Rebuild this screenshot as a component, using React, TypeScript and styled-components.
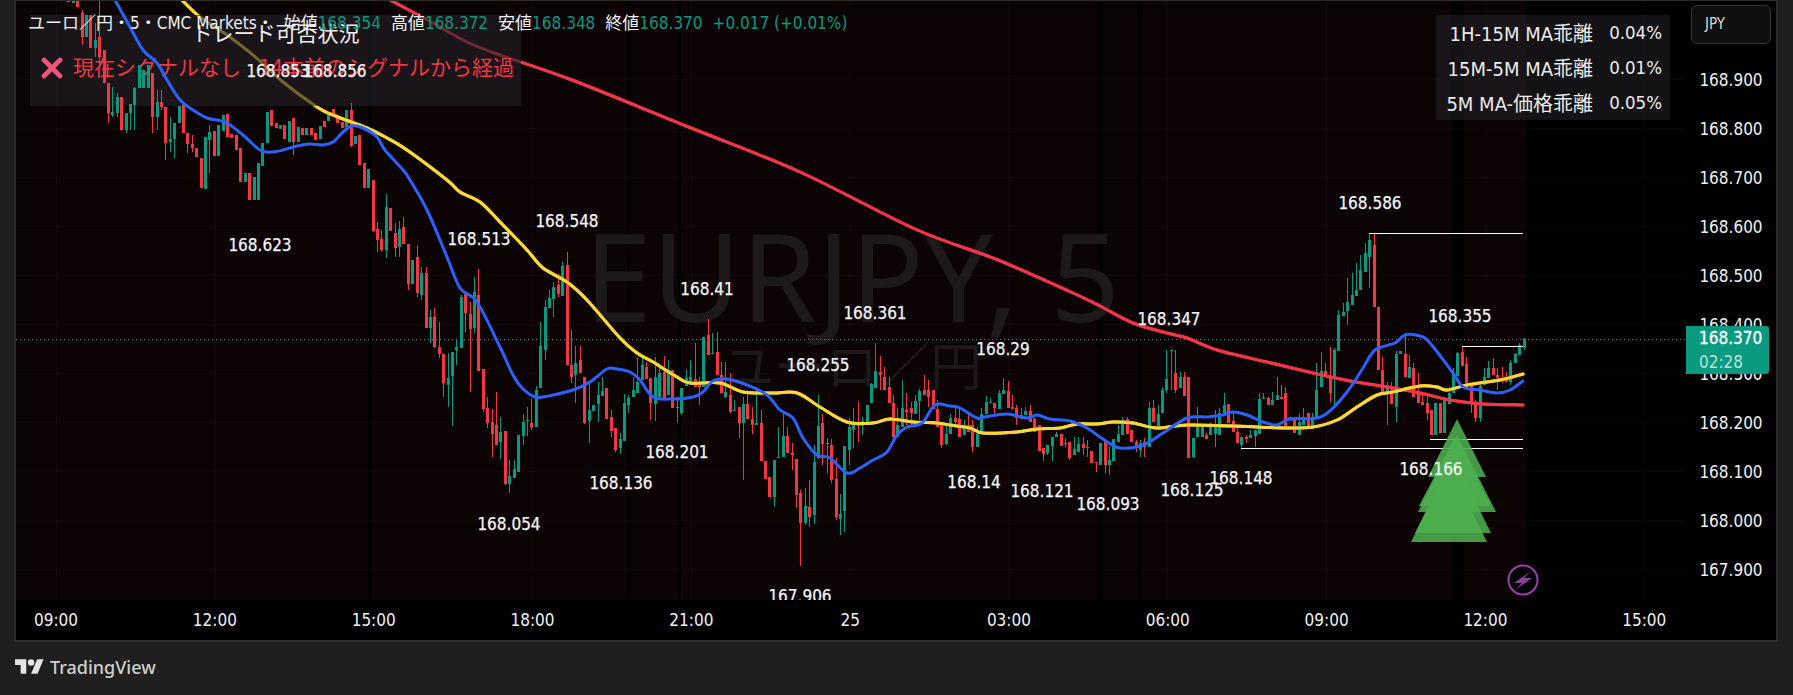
import { type FC } from "react";
import styled, { createGlobalStyle } from "styled-components";

const FONT = `"DejaVu Sans Condensed", "DejaVu Sans", "Noto Sans CJK JP", sans-serif`;
const GREEN = "#089981";
const RED = "#f23645";
const BAR_STEP = 4.41;
const BAR_ORIGIN = 68.3;

const GlobalStyle = createGlobalStyle`
  html, body {
    margin: 0;
    padding: 0;
    background: #1f1f1f;
    overflow: hidden;
  }
`;

const Page = styled.div`
  width: 1793px;
  height: 695px;
  display: flex;
  flex-direction: column;
  background: #1f1f1f;
  font-family: ${FONT};
`;

const Frame = styled.div`
  box-sizing: border-box;
  width: 1764px;
  height: 642px;
  margin-left: 14px;
  border: 2px solid #2d2d2d;
  border-top-width: 1px;
  background: #000;
  display: flex;
  flex-direction: column;
`;

const ChartRow = styled.div`
  display: flex;
  height: 599px;
`;

const Pane = styled.div`
  position: relative;
  width: 1670px;
  height: 599px;
  overflow: hidden;
  background: #000;
`;

const PlotLayer = styled.svg<{ $z: number }>`
  position: absolute;
  inset: 0;
  width: 1670px;
  height: 599px;
  z-index: ${({ $z }) => $z};
`;

const Watermark = styled.text<{ $size: number }>`
  font-family: "Noto Sans", "Noto Sans CJK JP", sans-serif;
  font-size: ${({ $size }) => $size}px;
  fill: #1d191b;
  text-anchor: middle;
`;

const PivotLabel = styled.text`
  font-family: ${FONT};
  font-size: 17px;
  fill: #f4f4f4;
  stroke: #f4f4f4;
  stroke-width: 0.25px;
  text-anchor: middle;
  dominant-baseline: central;
`;

const Legend = styled.div`
  position: absolute;
  top: 12px;
  left: 12px;
  z-index: 5;
  display: flex;
  align-items: center;
  gap: 10px;
  font-size: 17px;
  line-height: 20px;
  color: #f0f0f0;
  white-space: nowrap;
`;

const LegendItem = styled.span`
  display: inline-flex;
`;

const LegendValue = styled.span`
  color: ${GREEN};
`;

const StatusPanel = styled.div`
  position: absolute;
  top: 14px;
  left: 14px;
  width: 491px;
  height: 91px;
  z-index: 2;
  background: rgba(34, 32, 38, 0.62);
  display: flex;
  flex-direction: column;
  align-items: center;
`;

const StatusTitle = styled.div`
  margin-top: 5px;
  font-size: 21px;
  line-height: 28px;
  color: #f0f0f0;
`;

const StatusRow = styled.div`
  align-self: flex-start;
  display: flex;
  align-items: center;
  gap: 10px;
  margin: 6px 0 0 11px;
  font-size: 21px;
  line-height: 28px;
  color: ${RED};
  white-space: pre;
`;

const DivergenceTable = styled.div`
  position: absolute;
  top: 14px;
  left: 1420px;
  width: 234px;
  height: 105px;
  z-index: 2;
  background: rgba(34, 35, 40, 0.55);
  display: grid;
  grid-template-columns: 157px 69px;
  grid-auto-rows: 35px;
  align-items: center;
  color: #ececec;
`;

const DivergenceName = styled.div`
  text-align: right;
  white-space: nowrap;
  font-size: 20px;
`;

const DivergenceValue = styled.div`
  text-align: right;
  font-size: 18.5px;
`;

const PriceAxis = styled.div`
  position: relative;
  width: 90px;
  height: 599px;
  background: #000;
`;

const CurrencyButton = styled.div`
  box-sizing: border-box;
  width: 80px;
  height: 39px;
  margin: 4px 0 0 5px;
  padding-left: 13px;
  border: 1px solid #33363d;
  border-radius: 6px;
  background: #0e0e0f;
  font-size: 15px;
  line-height: 36px;
  color: #d8d8d8;
`;

const PriceScale = styled.div`
  margin-top: 12px;
  display: flex;
  flex-direction: column;
`;

const PriceTick = styled.div`
  height: 49px;
  line-height: 49px;
  width: 90px;
  text-align: center;
  font-size: 17px;
  color: #f0f0f0;
`;

const LastPriceBadge = styled.div`
  box-sizing: border-box;
  position: absolute;
  top: 325px;
  left: 0;
  width: 83px;
  height: 48px;
  padding-left: 13px;
  z-index: 3;
  background: #0a9a7f;
  border-radius: 0 3px 3px 0;
  font-size: 17px;
  line-height: 24px;
  color: #fff;
  -webkit-text-stroke: 0.3px #fff;
`;

const Countdown = styled.div`
  color: rgba(255, 255, 255, 0.72);
  -webkit-text-stroke: 0;
`;

const TimeAxis = styled.div`
  flex: 1;
  display: flex;
  align-items: center;
  gap: 114.75px;
  padding-left: 18px;
  background: #000;
  overflow: hidden;
`;

const TimeTick = styled.div`
  flex: 0 0 44px;
  text-align: center;
  font-size: 17px;
  white-space: nowrap;
  color: #f0f0f0;
`;

const Footer = styled.div`
  flex: 1;
  display: flex;
  align-items: center;
  gap: 6px;
  padding: 0 0 4px 15px;
`;

const Wordmark = styled.div`
  font-family: "Noto Sans", sans-serif;
  font-size: 18px;
  font-weight: 500;
  color: #cfcfcf;
`;

type CandleSegment = { ox: number; oy: number; rows: string };

// kind + x,top,bottom[,wickTop[,wickBottom]] read off 3x crops of the reference
const SEGMENTS: CandleSegment[] = [
  {
    ox: 0,
    oy: 0,
    rows: `r205,0,6 g222,0,8 r235,0,20 r248,40,110,30,135 g262,45,110 r275,45,145 g290,120,145,70,170 r302,110,170,0,200
      r314,150,250 r328,250,340,250,368 g340,335,345,260,350 g355,290,340,280,350 r367,290,390 g380,340,390,340,400
      g394,312,340,312,390 g406,265,315,260,390 g421,195,265 g433,210,265 g445,195,265 r460,220,350,220,400
      g472,305,350,270,390 r487,305,320,270,330 r499,320,430,320,480 g513,418,425,350,455 g526,368,418,368,475
      g540,318,370 r552,315,400 r565,400,432,400,460 r580,432,445,405,455 r593,443,470 r605,475,565 g618,412,568
      g632,397,420,375,520 r646,392,468 g660,375,468 g672,345,392 r686,342,412 r698,402,415 r712,405,450
      r725,445,545 g738,520,545 r752,520,600 g765,530,600 g778,490,600 g790,430,498 g803,335,428 r818,330,378
      r830,370,385 g845,375,387 r856,375,418 g868,363,425 r884,355,425,355,465 g896,380,425 r910,385,405
      g922,385,405 r936,385,405 r948,400,420 g962,378,418 r975,362,380 g988,335,362 r1000,328,350 r1015,345,370
      r1028,365,385 g1042,330,382 r1055,330,437,310,440 g1068,408,432 r1080,405,495 r1094,490,565 g1108,507,565`,
  },
  {
    ox: 300,
    oy: 180,
    rows: `r220,0,152,0,155 r234,148,180,125,215 r247,178,210,150,215 g260,80,210,42,233 r273,83,152 r286,160,203,130,230
      g300,148,200,122,230 r313,142,192,112 r326,192,312,192,330 g340,240,312 r353,230,338,195,352 g367,280,345,262,360
      r380,278,445,260 g393,410,445,390,488 r406,412,502,385,505 r419,502,522,425,535 r433,522,610,522,652
      g446,593,614,520,680 g459,516,587,516,737 g472,500,510,478,555 g485,350,503,345 r499,342,398,338,455
      r512,402,447,365,635 g524,335,445,292,458 r538,345,572,268 r551,568,688,568,695 r565,685,728,650,745
      r578,725,762,688,832 r590,735,795,635,795 g605,755,785,712,838 r617,752,912,752,915 g631,887,912,840,940
      g644,868,895,840 g657,765,875 g670,727,767,703,795 g683,720,722,680,767 r697,730,742,658,750 g710,630,740,618
      g724,498,625,427 g737,380,510,360,540 g749,355,383,330 g763,320,357,305,410 r776,315,342,282,350 g790,258,348,245
      r803,255,555,215 r816,555,590,450,610 g829,550,585,498,668 r842,540,578,498 r856,592,728,590,732
      g869,690,722,605,790 g882,675,692 g895,645,672,605,725 g908,632,648,590 r922,625,718 r935,712,752,690,770
      r948,745,810,745,815 g961,778,805,760,822 g974,670,782,642 g988,655,675,645,700 g1001,630,652,590
      g1013,605,638,530 g1027,555,600,530 r1040,560,597,545 r1055,595,670,595,720 g1067,592,672,530,722
      g1081,580,652,555 r1094,575,655,528 g1107,570,645,540 r1120,570,685 r1133,680,685,650,725 g1146,625,698,625,705
      g1159,595,618,570 g1172,590,605,540 r1186,598,620,490 r1199,610,622,590,675 g1213,472,622 r1225,465,525,418
      g1238,518,520,458 r1252,515,585,455 r1264,585,640,545 g1277,635,650,545,655 r1290,645,695,578,700
      g1303,690,692,660 r1317,682,728,682,775 g1330,672,730,650,900 r1344,672,718,630 r1357,718,735,680,762
      g1370,730,735,620 r1384,730,842,690 r1397,842,897 r1411,890,950 g1424,840,950,840,980 g1437,832,835,740
      g1450,768,832,700 r1463,768,820,740 r1477,820,825,790,870`,
  },
  {
    ox: 660,
    oy: 340,
    rows: `r408,357,465,357,505 r421,460,550,450,677 g436,498,550,445,555 r449,502,532,420,560 g463,365,525,315,552
      g476,258,355,165,358 r488,248,312,222,375 r502,310,312,295,400 r515,315,420,298,430 r529,418,530,355,540
      g542,522,537,462,585 g553,318,512,318,575 g568,262,330,235,375 g581,245,270,205,325 r594,245,258,185,305
      g607,243,258,230,285 g620,195,250 g634,132,190,130 g647,92,145,10,145 r660,97,105,48,150 r674,112,150,82
      r688,142,190,112 r701,190,290,165,295 g713,255,290,205 g727,205,260,120 r740,210,217,160,255 r753,205,218,185,255
      g766,182,222,165 g779,152,182,148,240 r793,150,165,105 r806,150,172,120,200 r820,150,207 r833,207,262,180,262
      r845,255,315,255,325 g858,282,312,250,315 g871,235,282,222 r885,235,245,200,265`,
  },
  {
    ox: 950,
    oy: 340,
    rows: `r28,237,290,205 g41,262,285,240 r54,255,275,215 r67,255,320,240,335 g81,282,322,260 g94,222,282,205
      g106,185,222,168 g120,185,187,175 r133,190,205,190,232 g147,160,208,150 g160,150,162,115 r173,153,203,122
      r186,200,207,165 r199,205,235,195,255 g213,225,238,205 g226,212,225,200 r239,212,245,195 r253,237,275,235
      r266,255,332 r280,325,342,325,362 g293,315,340,315,345 g307,292,318,292,362 g320,282,290,275 r333,282,318
      g346,308,310,295,322 r359,307,355,307,360 g373,328,345,292 g386,312,335,292 r398,312,325,292,345
      r411,322,325,300,350 r425,333,370 r439,365,368,365,395 g452,310,375 r465,300,375,300,400 g478,360,375,320,405
      g491,298,362 g505,282,305,255 g518,240,285,232 r531,238,282,232 r545,270,305 r558,305,320,300,335
      g571,308,330,300,352 r584,305,322,295,352 g596,205,322,185 r610,205,245,180 g622,222,258,195 g636,150,218,140
      g650,118,150,30,160 g662,30,32,30,150 r676,100,150,30,160 g689,110,145,95 r703,112,168,95 r716,112,353
      g728,295,350,295,355 g742,262,290,200 g756,262,290,260 r769,285,297,280 g782,250,285 g795,262,282,210,320
      g808,220,285,205 g821,195,220,160 r835,192,248 r848,242,275,220 r862,275,310,255 g875,292,315,290,320
      r888,290,297,285,310`,
  },
  {
    ox: 1100,
    oy: 200,
    rows: `g451,705,715,690 g464,690,708,690,740 g477,598,702,580 g490,595,598,580 r503,595,615,590 g517,600,615,575
      g530,585,600,530 r544,592,598,555 r556,580,680,560 g569,650,660 r583,655,700 g596,665,705,640 g609,650,675,625
      r622,638,680 g635,650,680,640 g649,570,655,488 g662,512,560,455 r676,512,530,490 r689,530,580,440,605
      g702,450,535,445,615 g715,345,452,330 g728,335,348,310 g742,305,332,235,375 g755,285,315,220 g768,270,288,190
      g781,210,270,165 g794,158,215,130 g808,120,170,100,265 r821,135,322,100 r834,322,510 r847,510,580,470
      g860,555,580,545,675 r873,570,612,545 g887,462,622,452,665 g901,452,462 r914,462,532,400 g927,502,535,465
      r940,505,590,490 r953,575,610,520 r966,605,615,585 r979,610,640,585,660 r992,630,705 g1005,610,705 r1019,610,700
      g1032,600,700,590 g1045,578,612,560 g1058,520,580,505 g1071,458,528,455 r1085,455,498,440 r1098,492,555,470
      r1111,555,605,555,640 r1124,605,655,600,665 g1138,558,655,555,665 g1151,530,555,505 g1165,505,535,482
      r1178,505,525,475 r1191,525,535,505,570 r1204,535,540,500,550 r1217,535,545,515,545 g1231,488,545,480,555
      g1244,462,490,458 g1257,435,465,430 g1270,418,445,415,450`,
  },
];

type Candle = { x: number; top: number; bottom: number; wickTop: number; wickBottom: number; up: boolean };

const CANDLES: Candle[] = SEGMENTS.flatMap(({ ox, oy, rows }) =>
  rows
    .trim()
    .split(/\s+/)
    .map((row) => {
      const [zx, top, bottom, wickTop = top, wickBottom = bottom] = row.slice(1).split(",").map(Number);
      const raw = ox + zx / 3;
      return {
        x: Math.round(BAR_ORIGIN + BAR_STEP * Math.round((raw - BAR_ORIGIN) / BAR_STEP)),
        top: oy + top / 3,
        bottom: oy + bottom / 3,
        wickTop: oy + wickTop / 3,
        wickBottom: oy + wickBottom / 3,
        up: row[0] === "g",
      };
    })
);

// catmull-rom through the read-off points, moving averages have no corners
const smoothPath = (points: string) => {
  const p = points.split(" ").map((pair) => pair.split(",").map(Number));
  let d = `M${p[0][0]} ${p[0][1]}`;
  for (let i = 0; i < p.length - 1; i++) {
    const a = p[Math.max(i - 1, 0)];
    const b = p[i];
    const c = p[i + 1];
    const e = p[Math.min(i + 2, p.length - 1)];
    const c1x = b[0] + (c[0] - a[0]) / 6;
    const c1y = b[1] + (c[1] - a[1]) / 6;
    const c2x = c[0] - (e[0] - b[0]) / 6;
    const c2y = c[1] - (e[1] - b[1]) / 6;
    d += `C${c1x.toFixed(1)} ${c1y.toFixed(1)} ${c2x.toFixed(1)} ${c2y.toFixed(1)} ${c[0]} ${c[1]}`;
  }
  return d;
};

const BLUE_LINE =
  "115,0 130,27 143,50 157,63 167,80 180,100 193,110 207,118 217,120 227,123 243,135 260,150 273,152 290,148 297,146 310,144 323,145 333,142 343,132 352,126 363,128 377,137 385,150 403,170 410,180 427,210 447,257 460,288 477,302 500,347 513,375 523,389 535,397 543,397 553,395 573,390 590,382 607,369 617,369 630,372 640,380 653,397 673,399 693,397 703,392 713,381 727,379 747,385 767,395 780,410 793,418 803,438 817,455 830,458 847,473 860,468 873,460 887,452 897,435 907,427 922,423 935,405 950,406 960,408 977,418 985,417 1007,414 1027,418 1037,415 1050,419 1070,421 1087,428 1103,439 1120,448 1143,445 1163,433 1187,418 1207,417 1223,415 1233,412 1247,415 1263,422 1277,425 1290,419 1317,418 1333,408 1350,388 1363,368 1375,350 1395,343 1405,335 1420,336 1430,343 1453,373 1463,387 1480,390 1497,393 1510,390 1523,381";
const YELLOW_LINE =
  "182,0 200,17 227,35 253,55 283,82 317,107 333,115 367,128 387,138 407,150 447,180 460,192 480,202 500,222 527,250 543,268 567,282 587,300 620,338 637,353 653,362 677,377 690,383 720,383 743,392 773,393 797,393 820,407 847,422 873,423 890,419 913,422 937,423 950,425 970,428 983,433 1017,432 1037,429 1060,428 1077,424 1097,424 1113,422 1133,423 1157,428 1187,425 1233,426 1257,427 1287,428 1313,427 1337,420 1357,407 1377,395 1393,392 1420,386 1437,387 1447,390 1467,385 1500,380 1523,374";
const RED_LINE =
  "390,0 433,23 467,42 500,55 572,80 686,126 800,172 915,229 998,260 1073,293 1100,306 1133,323 1167,333 1187,338 1217,350 1267,362 1313,373 1350,381 1387,387 1420,393 1450,400 1483,404 1523,405";

const LEVELS = [
  { x1: 1369, y: 233 },
  { x1: 1462, y: 346 },
  { x1: 1430, y: 439 },
  { x1: 1241, y: 448 },
];

const TREES = [
  { apex: 1457, top: 419, base: 477, half: 29 },
  { apex: 1455, top: 437, base: 506, half: 36 },
  { apex: 1457, top: 435, base: 512, half: 39 },
  { apex: 1453, top: 457, base: 533, half: 38 },
  { apex: 1449, top: 465, base: 542, half: 38 },
];

const PIVOTS = [
  { text: "168.853", x: 278, y: 71 },
  { text: "168.856", x: 335, y: 71 },
  { text: "168.623", x: 260, y: 245 },
  { text: "168.513", x: 479, y: 239 },
  { text: "168.548", x: 567, y: 221 },
  { text: "168.41", x: 707, y: 289 },
  { text: "168.361", x: 875, y: 313 },
  { text: "168.255", x: 818, y: 365 },
  { text: "168.29", x: 1003, y: 349 },
  { text: "168.347", x: 1169, y: 319 },
  { text: "168.586", x: 1370, y: 203 },
  { text: "168.355", x: 1460, y: 316 },
  { text: "168.201", x: 677, y: 452 },
  { text: "168.136", x: 621, y: 483 },
  { text: "168.054", x: 509, y: 524 },
  { text: "167.906", x: 800, y: 596 },
  { text: "168.14", x: 974, y: 482 },
  { text: "168.121", x: 1042, y: 491 },
  { text: "168.093", x: 1108, y: 504 },
  { text: "168.125", x: 1192, y: 490 },
  { text: "168.148", x: 1241, y: 478 },
  { text: "168.166", x: 1431, y: 469 },
];

const PRICE_TICKS = ["168.900", "168.800", "168.700", "168.600", "168.500", "168.400", "168.300", "168.200", "168.100", "168.000", "167.900"];
const TIME_TICKS = ["09:00", "12:00", "15:00", "18:00", "21:00", "25", "03:00", "06:00", "09:00", "12:00", "15:00"];
const SESSION_GAPS = [
  [368, 4],
  [627, 3],
  [678, 3],
  [1097, 6],
  [1137, 5],
  [1451, 13],
];

const VIEW_BOX = "16 1 1670 599";

const MaLine: FC<{ points: string; color: string }> = ({ points, color }) => (
  <path d={smoothPath(points)} fill="none" stroke={color} strokeWidth={3} strokeLinecap="round" />
);

const Backdrop: FC = () => (
  <PlotLayer $z={1} viewBox={VIEW_BOX}>
    <rect x={16} y={0} width={1510} height={600} fill="#0c0305" />
    {SESSION_GAPS.map(([x, w]) => (
      <rect key={x} x={x} y={0} width={w} height={600} fill="#000" />
    ))}
    {PRICE_TICKS.map((_, i) => (
      <line key={i} x1={16} x2={1686} y1={79.5 + i * 49} y2={79.5 + i * 49} stroke="rgba(255,255,255,0.025)" />
    ))}
    {TIME_TICKS.map((_, i) => (
      <line key={i} x1={56.5 + i * 158.75} x2={56.5 + i * 158.75} y1={0} y2={600} stroke="rgba(255,255,255,0.025)" />
    ))}
    <Watermark $size={122} x={852} y={322}>
      EURJPY, 5
    </Watermark>
    <Watermark $size={52} x={852} y={386}>
      ユーロ／円
    </Watermark>
    <line x1={16} x2={1686} y1={339.5} y2={339.5} stroke={GREEN} strokeDasharray="1 3" />
    <MaLine points={RED_LINE} color={RED} />
    <MaLine points={YELLOW_LINE} color="#fdd835" />
  </PlotLayer>
);

const Plot: FC = () => (
  <PlotLayer $z={3} viewBox={VIEW_BOX}>
    <defs>
      <clipPath id="outside-panel">
        <rect x={16} y={106} width={1670} height={494} />
        <rect x={521} y={0} width={1165} height={106} />
        <rect x={16} y={0} width={505} height={15} />
      </clipPath>
    </defs>
    <g shapeRendering="crispEdges">
      {CANDLES.map((c, i) => (
        <g key={i} fill={c.up ? GREEN : RED}>
          <rect x={c.x} y={c.wickTop} width={1} height={c.wickBottom - c.wickTop} />
          <rect x={c.x - 1} y={c.top} width={3} height={Math.max(c.bottom - c.top, 1)} />
        </g>
      ))}
    </g>
    <g clipPath="url(#outside-panel)">
      <MaLine points={RED_LINE} color={RED} />
      <MaLine points={YELLOW_LINE} color="#fdd835" />
    </g>
    <MaLine points={BLUE_LINE} color="#2962ff" />
    {LEVELS.map(({ x1, y }) => (
      <line key={y} x1={x1} x2={1523} y1={y + 0.5} y2={y + 0.5} stroke="#fff" />
    ))}
    {TREES.map(({ apex, top, base, half }) => (
      <polygon
        key={top}
        points={`${apex},${top} ${apex + half},${base} ${apex - half},${base}`}
        fill="#4caf50"
        fillOpacity={0.88}
      />
    ))}
    {PIVOTS.map(({ text, x, y }) => (
      <PivotLabel key={text} x={x} y={y}>
        {text}
      </PivotLabel>
    ))}
    <circle cx={1523} cy={580} r={14.5} fill="#000" stroke="#9c3fae" strokeWidth={2} />
    <polygon points="1531,571 1514,583 1522,583 1515,590 1532,578 1524,578" fill="#8e3fa0" />
  </PlotLayer>
);

const CrossIcon: FC = () => (
  <svg width="22" height="22" viewBox="0 0 22 22">
    <path d="M3 3 L19 19 M19 3 L3 19" stroke="#f0557c" strokeWidth={4.6} strokeLinecap="round" />
  </svg>
);

const TvLogo: FC = () => (
  <svg width="29" height="15" viewBox="0 4 36 18" fill="#e4e4e4">
    <path d="M14 22H7V11H0V4h14v18zM28 22h-8l7.5-18h8L28 22z" />
    <circle cx="20" cy="8" r="4" />
  </svg>
);

const App: FC = () => (
  <Page>
    <GlobalStyle />
    <Frame>
      <ChartRow>
        <Pane>
          <Backdrop />
          <StatusPanel>
            <StatusTitle>トレード可否状況</StatusTitle>
            <StatusRow>
              <CrossIcon />
              {"現在シグナルなし   14本前のシグナルから経過"}
            </StatusRow>
          </StatusPanel>
          <Plot />
          <Legend>
            <LegendItem>ユーロ／円・5・CMC Markets・</LegendItem>
            <LegendItem>
              始値<LegendValue>168.354</LegendValue>
            </LegendItem>
            <LegendItem>
              高値<LegendValue>168.372</LegendValue>
            </LegendItem>
            <LegendItem>
              安値<LegendValue>168.348</LegendValue>
            </LegendItem>
            <LegendItem>
              終値<LegendValue>168.370</LegendValue>
            </LegendItem>
            <LegendValue>+0.017 (+0.01%)</LegendValue>
          </Legend>
          <DivergenceTable>
            <DivergenceName>1H-15M MA乖離</DivergenceName>
            <DivergenceValue>0.04%</DivergenceValue>
            <DivergenceName>15M-5M MA乖離</DivergenceName>
            <DivergenceValue>0.01%</DivergenceValue>
            <DivergenceName>5M MA-価格乖離</DivergenceName>
            <DivergenceValue>0.05%</DivergenceValue>
          </DivergenceTable>
        </Pane>
        <PriceAxis>
          <CurrencyButton>JPY</CurrencyButton>
          <PriceScale>
            {PRICE_TICKS.map((tick) => (
              <PriceTick key={tick}>{tick}</PriceTick>
            ))}
          </PriceScale>
          <LastPriceBadge>
            168.370
            <Countdown>02:28</Countdown>
          </LastPriceBadge>
        </PriceAxis>
      </ChartRow>
      <TimeAxis>
        {TIME_TICKS.map((tick, i) => (
          <TimeTick key={i}>{tick}</TimeTick>
        ))}
      </TimeAxis>
    </Frame>
    <Footer>
      <TvLogo />
      <Wordmark>TradingView</Wordmark>
    </Footer>
  </Page>
);

export default App;
